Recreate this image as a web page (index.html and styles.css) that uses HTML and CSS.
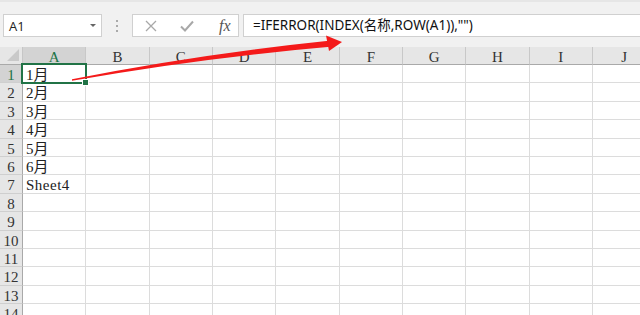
FILE: index.html
```html
<!DOCTYPE html>
<html lang="zh">
<head>
    <meta charset="UTF-8">
    <title>IFERROR INDEX</title>
    <link rel="stylesheet" href="styles.css">
</head>
<body>
    <div class="toolbar">
        <div class="name-box">
            <span>A1</span>
            <span class="caret"></span>
        </div>
        <div class="grip"><i></i><i></i><i></i></div>
        <div class="func-box">
            <svg class="icon" width="12" height="12" viewBox="0 0 12 12"><path d="M1 1 L11 11 M11 1 L1 11" stroke="#a8a8a8" stroke-width="1.3" fill="none"/></svg>
            <svg class="icon" width="14" height="12" viewBox="0 0 14 12"><path d="M1 6.5 L5 10.5 L13 1.5" stroke="#a8a8a8" stroke-width="2" fill="none"/></svg>
            <span class="fx">fx</span>
        </div>
        <div class="formula">=IFERROR(INDEX(名称,ROW(A1)),"")</div>
    </div>

    <div class="sheet">
        <div class="corner"></div>
        <div class="col-head selected">A</div>
        <div class="col-head">B</div>
        <div class="col-head">C</div>
        <div class="col-head">D</div>
        <div class="col-head">E</div>
        <div class="col-head">F</div>
        <div class="col-head">G</div>
        <div class="col-head">H</div>
        <div class="col-head">I</div>
        <div class="col-head">J</div>

        <div class="row-head selected">1</div>
        <div class="cell active">1月</div><div class="cell"></div><div class="cell"></div><div class="cell"></div><div class="cell"></div><div class="cell"></div><div class="cell"></div><div class="cell"></div><div class="cell"></div><div class="cell"></div>
        <div class="row-head">2</div>
        <div class="cell">2月</div><div class="cell"></div><div class="cell"></div><div class="cell"></div><div class="cell"></div><div class="cell"></div><div class="cell"></div><div class="cell"></div><div class="cell"></div><div class="cell"></div>
        <div class="row-head">3</div>
        <div class="cell">3月</div><div class="cell"></div><div class="cell"></div><div class="cell"></div><div class="cell"></div><div class="cell"></div><div class="cell"></div><div class="cell"></div><div class="cell"></div><div class="cell"></div>
        <div class="row-head">4</div>
        <div class="cell">4月</div><div class="cell"></div><div class="cell"></div><div class="cell"></div><div class="cell"></div><div class="cell"></div><div class="cell"></div><div class="cell"></div><div class="cell"></div><div class="cell"></div>
        <div class="row-head">5</div>
        <div class="cell">5月</div><div class="cell"></div><div class="cell"></div><div class="cell"></div><div class="cell"></div><div class="cell"></div><div class="cell"></div><div class="cell"></div><div class="cell"></div><div class="cell"></div>
        <div class="row-head">6</div>
        <div class="cell">6月</div><div class="cell"></div><div class="cell"></div><div class="cell"></div><div class="cell"></div><div class="cell"></div><div class="cell"></div><div class="cell"></div><div class="cell"></div><div class="cell"></div>
        <div class="row-head">7</div>
        <div class="cell latin">Sheet4</div><div class="cell"></div><div class="cell"></div><div class="cell"></div><div class="cell"></div><div class="cell"></div><div class="cell"></div><div class="cell"></div><div class="cell"></div><div class="cell"></div>
        <div class="row-head">8</div>
        <div class="cell"></div><div class="cell"></div><div class="cell"></div><div class="cell"></div><div class="cell"></div><div class="cell"></div><div class="cell"></div><div class="cell"></div><div class="cell"></div><div class="cell"></div>
        <div class="row-head">9</div>
        <div class="cell"></div><div class="cell"></div><div class="cell"></div><div class="cell"></div><div class="cell"></div><div class="cell"></div><div class="cell"></div><div class="cell"></div><div class="cell"></div><div class="cell"></div>
        <div class="row-head">10</div>
        <div class="cell"></div><div class="cell"></div><div class="cell"></div><div class="cell"></div><div class="cell"></div><div class="cell"></div><div class="cell"></div><div class="cell"></div><div class="cell"></div><div class="cell"></div>
        <div class="row-head">11</div>
        <div class="cell"></div><div class="cell"></div><div class="cell"></div><div class="cell"></div><div class="cell"></div><div class="cell"></div><div class="cell"></div><div class="cell"></div><div class="cell"></div><div class="cell"></div>
        <div class="row-head">12</div>
        <div class="cell"></div><div class="cell"></div><div class="cell"></div><div class="cell"></div><div class="cell"></div><div class="cell"></div><div class="cell"></div><div class="cell"></div><div class="cell"></div><div class="cell"></div>
        <div class="row-head">13</div>
        <div class="cell"></div><div class="cell"></div><div class="cell"></div><div class="cell"></div><div class="cell"></div><div class="cell"></div><div class="cell"></div><div class="cell"></div><div class="cell"></div><div class="cell"></div>
        <div class="row-head">14</div>
        <div class="cell"></div><div class="cell"></div><div class="cell"></div><div class="cell"></div><div class="cell"></div><div class="cell"></div><div class="cell"></div><div class="cell"></div><div class="cell"></div><div class="cell"></div>
    </div>

    <!-- red annotation arrow drawn over the screenshot -->
    <svg class="arrow" width="640" height="315" viewBox="0 0 640 315">
        <path d="M72 79.2 Q200 54 331 40.5 L333 46.5 Q200 58 72 80.8 Z" fill="#f41a1a"/>
        <path d="M326 35.5 L342 42 L329 51 Z" fill="#f41a1a"/>
    </svg>
</body>
</html>
```

FILE: styles.css
```css
body {
    margin: 0;
    background: #f1f1f1;
    font-family: "Liberation Serif", "Noto Sans CJK SC", serif;
    overflow: hidden;
    height: 315px;
    border-top: 2px solid #e6e6e6;
    box-sizing: border-box;
}

.toolbar {
    display: flex;
    align-items: center;
    height: 23px;
    margin-top: 12px;
    margin-bottom: 10px;
}

.name-box {
    box-sizing: border-box;
    width: 99px;
    height: 23px;
    margin-left: 3px;
    background: #fff;
    border: 1px solid #d0d0d0;
    display: flex;
    align-items: center;
    justify-content: space-between;
    padding: 0 5px 0 5px;
    font-family: "Open Sans", "Liberation Sans", sans-serif;
    font-size: 13px;
    color: #222;
}

.caret {
    width: 0;
    height: 0;
    border-left: 3px solid transparent;
    border-right: 3px solid transparent;
    border-top: 3px solid #666;
}

.grip {
    display: flex;
    flex-direction: column;
    gap: 3px;
    margin-left: 14px;
    margin-right: 14px;
}

.grip i {
    display: block;
    width: 2px;
    height: 2px;
    background: #aaa;
}

.func-box {
    box-sizing: border-box;
    width: 107px;
    height: 23px;
    background: #fff;
    border: 1px solid #d0d0d0;
    display: flex;
    align-items: center;
    padding-left: 12px;
    gap: 23px;
}

.fx {
    font-family: "Liberation Serif", serif;
    font-style: italic;
    font-size: 16px;
    color: #555;
    margin-left: 2px;
}

.formula {
    box-sizing: border-box;
    flex: 1;
    height: 23px;
    margin-left: 4px;
    background: #fff;
    border: 1px solid #d0d0d0;
    border-right: none;
    padding-left: 9px;
    font-family: "Noto Sans", "Noto Sans CJK SC", sans-serif;
    font-size: 13.5px;
    line-height: 21px;
    color: #111;
}

.sheet {
    display: grid;
    grid-template-columns: 23px repeat(10, 63.33px);
    grid-template-rows: 18px repeat(14, 18.4px);
    background: #fff;
    font-size: 15px;
    color: #222;
}

.sheet > div {
    box-sizing: border-box;
    border-right: 1px solid #dcdcdc;
    border-bottom: 1px solid #dcdcdc;
    overflow: visible;
    white-space: nowrap;
}

.corner {
    background: #e6e6e6;
    position: relative;
    border-bottom-color: #a9a9a9 !important;
    border-right-color: #c6c6c6 !important;
}

.corner::after {
    content: "";
    position: absolute;
    right: 3px;
    bottom: 3px;
    width: 0;
    height: 0;
    border-left: 12px solid transparent;
    border-bottom: 12px solid #c9c9c9;
}

.col-head {
    background: #e6e6e6;
    border-right-color: #c8c8c8 !important;
    border-bottom-color: #a9a9a9 !important;
    text-align: center;
    line-height: 20px;
    color: #333;
}

.row-head {
    background: #e6e6e6;
    border-right-color: #a9a9a9 !important;
    border-bottom-color: #cfcfcf !important;
    text-align: center;
    line-height: 20px;
    color: #333;
}

.col-head.selected,
.row-head.selected {
    background: #d3d3d3;
    color: #217346;
}

.col-head.selected {
    border-bottom-color: #217346 !important;
}

.cell {
    padding-left: 3px;
    line-height: 21px;
}

.cell.latin {
    letter-spacing: 0.5px;
}

.cell.active {
    position: relative;
}

.cell.active::before {
    content: "";
    position: absolute;
    left: -2px;
    top: -2px;
    right: -2px;
    bottom: -2px;
    border: 2px solid #217346;
}

.cell.active::after {
    content: "";
    position: absolute;
    right: -4px;
    bottom: -4px;
    width: 5px;
    height: 5px;
    background: #217346;
    border: 1px solid #fff;
}

.arrow {
    position: absolute;
    left: 0;
    top: 0;
    pointer-events: none;
}
```
